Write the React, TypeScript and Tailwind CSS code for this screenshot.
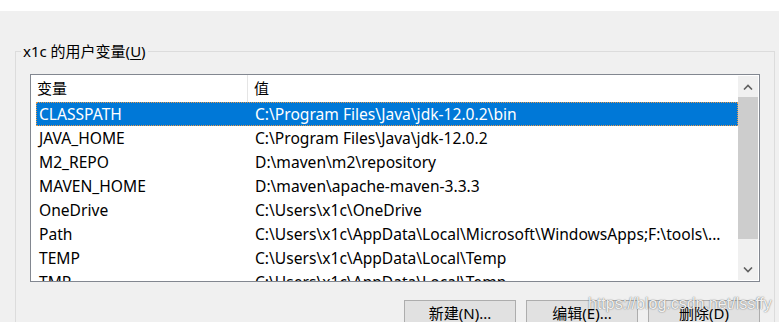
import React from "react";

const rows: [string, string][] = [
  ["CLASSPATH", "C:\\Program Files\\Java\\jdk-12.0.2\\bin"],
  ["JAVA_HOME", "C:\\Program Files\\Java\\jdk-12.0.2"],
  ["M2_REPO", "D:\\maven\\m2\\repository"],
  ["MAVEN_HOME", "D:\\maven\\apache-maven-3.3.3"],
  ["OneDrive", "C:\\Users\\x1c\\OneDrive"],
  ["Path", "C:\\Users\\x1c\\AppData\\Local\\Microsoft\\WindowsApps;F:\\tools\\..."],
  ["TEMP", "C:\\Users\\x1c\\AppData\\Local\\Temp"],
  ["TMP", "C:\\Users\\x1c\\AppData\\Local\\Temp"],
];

function Chevron({ up }: { up?: boolean }) {
  return (
    <svg width="10" height="6" viewBox="0 0 10 6" className="block">
      <path
        d={up ? "M1 5.5 L5 1.5 L9 5.5" : "M1 0.5 L5 4.5 L9 0.5"}
        fill="none"
        stroke="#606060"
        strokeWidth="1.6"
      />
    </svg>
  );
}

export default function App() {
  return (
    <div
      className="relative w-[779px] h-[322px] overflow-hidden bg-[#f0f0f0] text-[15px] text-black"
      style={{ fontFamily: '"Noto Sans", "Noto Sans CJK SC", sans-serif' }}
    >
      <div className="h-[11px] bg-white" />
      <div className="pt-[30px] pl-[15px] pr-[4px]">
        <fieldset className="border border-[#dcdcdc] h-[400px] m-0 p-0">
          <legend className="ml-[5px] px-[2px] leading-[20px]">
            x1c 的用户变量(<span className="underline underline-offset-2">U</span>)
          </legend>
          <div className="pt-[13px] px-[14px]">
            <div className="flex h-[208px] border border-[#828790] bg-white">
              <div className="flex-1 overflow-hidden">
                <div className="flex h-[27px] items-center">
                  <div className="w-[217px] h-full pl-[6px] flex items-center border-r border-[#e5e5e5]">
                    变量
                  </div>
                  <div className="pl-[6px]">值</div>
                </div>
                {rows.map(([k, v], i) => (
                  <div
                    key={k}
                    className={
                      i === 0
                        ? "ml-[5px] flex h-[24px] items-center pt-[2px] bg-[#0078d7] text-white outline outline-1 -outline-offset-1 outline-dotted outline-[#e89a4a]"
                        : "ml-[5px] flex h-[24px] items-center pt-[2px]"
                    }
                  >
                    <div className="w-[212px] pl-[3px] whitespace-nowrap text-[15.6px]">{k}</div>
                    <div className="pl-[7px] whitespace-nowrap text-[15.6px]">{v}</div>
                  </div>
                ))}
              </div>
              <div className="py-[1px] pr-[1px]">
                <div className="flex h-full w-[20px] flex-col bg-[#f0f0f0]">
                  <div className="flex h-[21px] items-center justify-center">
                    <Chevron up />
                  </div>
                  <div className="h-[142px] bg-[#cdcdcd]" />
                  <div className="flex-1" />
                  <div className="flex h-[21px] items-center justify-center">
                    <Chevron />
                  </div>
                </div>
              </div>
            </div>
            <div className="mt-[18px] flex justify-end gap-[10px]">
              {["新建(N)...", "编辑(E)...", "删除(D)"].map((t) => (
                <button
                  key={t}
                  className="h-[26px] w-[112px] border border-[#adadad] bg-[#e1e1e1] text-center"
                >
                  {t}
                </button>
              ))}
            </div>
          </div>
        </fieldset>
      </div>
      <div
        className="absolute left-[588px] top-[292px] whitespace-nowrap text-[16px] text-white/90 [text-shadow:0_0_1px_rgba(0,0,0,0.5),0_0_2px_rgba(0,0,0,0.25)]"
        style={{ fontFamily: '"Liberation Sans", Arial, sans-serif' }}
      >
        https://blog.csdn.net/lssffy
      </div>
    </div>
  );
}
